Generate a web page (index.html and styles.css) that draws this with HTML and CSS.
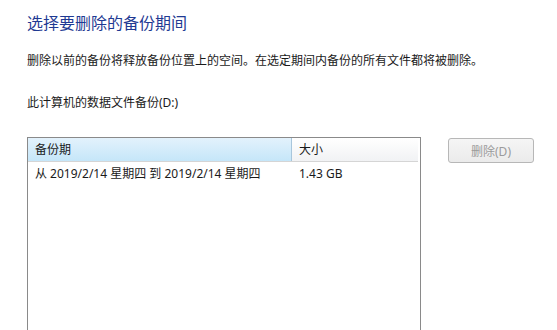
FILE: index.html
```html
<!DOCTYPE html>
<html lang="zh-CN">
<head>
<meta charset="utf-8">
<link rel="stylesheet" href="styles.css">
</head>
<body>
<div class="page">
  <h1 class="title">选择要删除的备份期间</h1>
  <p class="desc">删除以前的备份将释放备份位置上的空间。在选定期间内备份的所有文件都将被删除。</p>
  <p class="label">此计算机的数据文件备份(D:)</p>
  <div class="main">
    <div class="list">
      <div class="header">
        <div class="col col-period hot">备份期</div>
        <div class="col col-size">大小</div>
      </div>
      <div class="row">
        <div class="cell col-period">从 2019/2/14 星期四 到 2019/2/14 星期四</div>
        <div class="cell col-size">1.43 GB</div>
      </div>
    </div>
    <button class="btn" disabled>删除(D)</button>
  </div>
</div>
</body>
</html>
```

FILE: styles.css
```css
html, body {
  margin: 0;
  padding: 0;
  background: #ffffff;
}
body {
  height: 330px;
  overflow: hidden;
  font-family: "Noto Sans", "Noto Sans CJK SC", sans-serif;
  font-size: 12px;
  color: #1a1a1a;
}
.page {
  padding: 11px 0 0 27px;
}
.title {
  margin: 0;
  font-family: "Noto Sans CJK SC", sans-serif;
  font-size: 16px;
  font-weight: normal;
  line-height: 22px;
  color: #1f3a93;
}
.desc {
  margin: 20px 0 0 0;
  line-height: 16px;
}
.label {
  margin: 26px 0 0 0;
  line-height: 16px;
}
.main {
  margin-top: 26px;
  display: flex;
  align-items: flex-start;
  gap: 27px;
}
.list {
  width: 392px;
  height: 192px;
  border: 1px solid #8a8a8a;
  border-bottom: none;
  background: #fff;
}
.header {
  display: flex;
  height: 23px;
  border-bottom: 1px solid #d5d5d5;
  margin-right: 2px;
}
.header .col {
  box-sizing: border-box;
  padding-left: 7px;
  line-height: 23px;
  background: linear-gradient(#ffffff, #f1f2f4);
}
.header .col.hot {
  background: linear-gradient(#e3f2fc, #c5e6f9);
  border-right: 1px solid #a8c6dc;
}
.col-period {
  width: 264px;
  flex: none;
}
.col-size {
  flex: 1;
}
.row {
  display: flex;
  height: 20px;
  line-height: 20px;
  margin-top: 2px;
}
.cell {
  box-sizing: border-box;
  padding-left: 7px;
}
.row .col-period {
  width: 264px;
}
.btn {
  width: 86px;
  height: 25px;
  margin-top: 1px;
  border: 1px solid #b7b7b7;
  border-radius: 3px;
  background: linear-gradient(#f5f5f5, #ebebeb);
  color: #9b9b9b;
  font-family: "Noto Sans", "Noto Sans CJK SC", sans-serif;
  font-size: 12px;
  padding: 0;
}
```
